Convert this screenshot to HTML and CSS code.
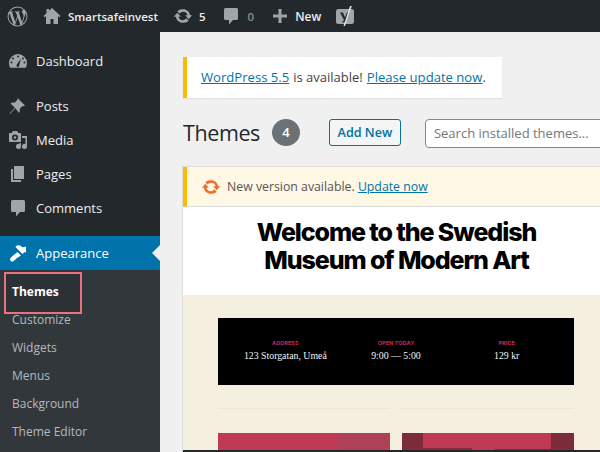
FILE: index.html
```html
<!DOCTYPE html>
<html lang="en">
<head>
<meta charset="utf-8">
<title>Themes</title>
<link rel="stylesheet" href="styles.css">
</head>
<body>
<div class="adminbar">
  <svg class="ab-wp" viewBox="0 0 20 20"><path d="M10 .5a9.5 9.5 0 1 0 0 19 9.5 9.5 0 0 0 0-19zM1.500 10c0-1.200.26-2.400.72-3.450l4.060 11.100A8.500 8.500 0 0 1 1.500 10zm8.500 8.500c-.83 0-1.640-.12-2.400-.35l2.550-7.400 2.610 7.150.06.120a8.500 8.500 0 0 1-2.820.48zm1.170-12.480c.51-.03.97-.08.97-.08.46-.05.4-.73-.05-.7 0 0-1.380.1-2.270.1-.83 0-2.240-.1-2.240-.1-.46-.03-.51.68-.05.7 0 0 .43.050.89.08l1.320 3.620-1.860 5.570-3.090-9.190c.51-.03.97-.08.97-.08.46-.05.4-.73-.05-.7 0 0-1.380.1-2.270.1h-.55A8.500 8.500 0 0 1 15.750 3.720h-.11c-.83 0-1.430.73-1.430 1.510 0 .7.4 1.290.84 2 .33.570.71 1.310.71 2.380 0 .74-.28 1.600-.66 2.790l-.85 2.850zm3.110 11.360 2.600-7.510c.49-1.220.65-2.190.65-3.050 0-.31-.02-.6-.06-.87A8.500 8.500 0 0 1 14.280 17.380z"/></svg>
  <svg class="ab-ico ab-home" viewBox="0 0 20 20"><path d="M18.500 10 10 2 7 4.800V3H4.500v4.200L1.500 10l1.200 1.200L4 10v8h4.500v-5h3v5H16v-8l1.300 1.200z"/></svg>
  <span class="ab-site">Smartsafeinvest</span>
  <svg class="ab-ico ab-upd" viewBox="0 0 20 20"><path d="M10.200 3.280c3.530 0 6.430 2.610 6.920 6h2.080l-3.500 4-3.500-4h2.320a4.439 4.439 0 0 0-4.320-3.440c-1.450 0-2.730.71-3.540 1.790L4.290 5.220a6.955 6.955 0 0 1 5.910-1.940zm-.4 13.440c-3.520 0-6.430-2.610-6.920-6H.8l3.500-4 3.500 4H5.480a4.439 4.439 0 0 0 4.320 3.440c1.450 0 2.730-.71 3.540-1.790l2.370 2.410a6.955 6.955 0 0 1-5.910 1.940z"/></svg>
  <span class="ab-num">5</span>
  <svg class="ab-ico ab-com" viewBox="0 0 20 20"><path d="M4.500 2h11A1.500 1.500 0 0 1 17 3.500v9a1.500 1.500 0 0 1-1.500 1.500H12l-4 4.500V14H4.500A1.500 1.500 0 0 1 3 12.500v-9A1.500 1.500 0 0 1 4.500 2z"/></svg>
  <span class="ab-zero">0</span>
  <svg class="ab-ico ab-plus" viewBox="0 0 20 20"><path d="M17 8.500v3h-5.500V17h-3v-5.500H3v-3h5.500V3h3v5.500z"/></svg>
  <span class="ab-new">New</span>
  <svg class="ab-yoast" viewBox="0 0 18 20"><rect x="0" y="3" width="18" height="15" rx="2.500"/><path class="yo-y" d="M4 6.500h3l2 5 2-5h2.500l-3.500 8c-.5 1.300-1.200 2-2.500 2H6.500v-1.600c.8 0 1.200-.3 1.500-1z"/><path class="yo-s" d="M14 0h1.800L9 20H7.500z"/></svg>
</div>
<div class="layout">
  <nav class="sidebar">
    <a class="mi"><svg viewBox="0 0 20 20"><path fill-rule="evenodd" d="M10 3a9 9 0 0 0-9 9c0 1.800.5 3.400 1.400 4.800h15.200A9 9 0 0 0 19 12a9 9 0 0 0-9-9zM9 5.500a1 1 0 1 1 2 0 1 1 0 0 1-2 0zM5 6.500a1 1 0 1 1 0 2 1 1 0 0 1 0-2zm-1.500 6a1 1 0 1 1 0-2 1 1 0 0 1 0 2zm7.500 3a1.500 1.500 0 0 1-2.500-1.500L13 7.500 11.300 14c.1.600 0 1.100-.3 1.500zm4-9a1 1 0 1 1 0 2 1 1 0 0 1 0-2zm1.500 6a1 1 0 1 1 0-2 1 1 0 0 1 0 2z"/></svg><span>Dashboard</span></a>
    <a class="mi mi-gap"><svg viewBox="0 0 20 20"><path d="M10.440 3.020 17 9.580l-1.400.7-1-.4-2.900 2.900c.4 1.400.2 2.900-.7 4.120L7.400 12.300 2 18l-.4-.4 5.300-5.800-4.400-4.400c1.200-.9 2.700-1.100 4.100-.7l2.900-2.900-.4-1 1.340-.3z"/></svg><span>Posts</span></a>
    <a class="mi"><svg viewBox="0 0 20 20"><path fill-rule="evenodd" d="M13 11V4c0-.55-.45-1-1-1h-1.670L9 1H5L3.670 3H2c-.55 0-1 .45-1 1v7c0 .55.45 1 1 1h10c.55 0 1-.45 1-1zM7 4.500a3 3 0 1 1 0 6 3 3 0 0 1 0-6zM14 6h5v10.500a2.500 2.500 0 1 1-1.500-2.300V8h-3.500zm-1 7v3.500a2.500 2.500 0 1 1-1.500-2.300V13zM7 6.200a1.300 1.300 0 1 0 0 2.600 1.300 1.300 0 0 0 0-2.600z"/></svg><span>Media</span></a>
    <a class="mi"><svg viewBox="0 0 20 20"><path d="M6 15V2h10v13H6zm-1 1h8v2H3V5h2v11z"/></svg><span>Pages</span></a>
    <a class="mi"><svg viewBox="0 0 20 20"><path d="M4.500 2h11A1.500 1.500 0 0 1 17 3.500v9a1.500 1.500 0 0 1-1.500 1.500H12l-4 4.500V14H4.500A1.500 1.500 0 0 1 3 12.500v-9A1.500 1.500 0 0 1 4.500 2z"/></svg><span>Comments</span></a>
    <a class="mi mi-gap mi-cur"><svg viewBox="0 0 20 20"><path d="M14.480 11.060 7.410 3.990l1.500-1.500c.5-.56 2.300-.47 3.590.32 1.290.78 1.770 1.640 2.370 1.520.59-.12 1.730-.6 3.130-.6v5.500c-1.500-.2-2-.2-2.500.83zM13 12.550l-3.500-3.500-4.350 3.350c-.6.600-2.400 2-3 3.400-.4.800.1 1.600.6 2.100s1.400 1 2.100.6c1.400-.6 2.800-2.400 3.400-3z"/></svg><span>Appearance</span></a>
    <div class="sub">
      <a class="si si-active">Themes</a>
      <a class="si">Customize</a>
      <a class="si">Widgets</a>
      <a class="si">Menus</a>
      <a class="si">Background</a>
      <a class="si">Theme Editor</a>
    </div>
  </nav>
  <main class="content">
    <div class="notice"><a>WordPress 5.5</a><span>is available!</span><a>Please update now</a>.</div>
    <div class="head">
      <h1>Themes</h1>
      <span class="count">4</span>
      <a class="addnew">Add New</a>
      <span class="search">Search installed themes...</span>
    </div>
    <section class="card">
      <div class="upd">
        <svg viewBox="0 0 20 20"><path d="M10.200 3.280c3.530 0 6.430 2.610 6.920 6h2.080l-3.500 4-3.500-4h2.320a4.439 4.439 0 0 0-4.320-3.440c-1.450 0-2.730.71-3.540 1.790L4.290 5.220a6.955 6.955 0 0 1 5.910-1.940zm-.4 13.440c-3.520 0-6.430-2.610-6.920-6H.8l3.500-4 3.500 4H5.480a4.439 4.439 0 0 0 4.320 3.440c1.450 0 2.730-.71 3.540-1.790l2.370 2.410a6.955 6.955 0 0 1-5.910 1.940z"/></svg>
        <span>New version available. <a>Update now</a></span>
      </div>
      <div class="welcome">Welcome to the Swedish<br>Museum of Modern Art</div>
      <div class="cream">
        <div class="info">
          <div class="col"><b>ADDRESS</b><span>123 Storgatan, Umeå</span></div>
          <div class="col"><b>OPEN TODAY</b><span>9:00 — 5:00</span></div>
          <div class="col"><b>PRICE</b><span>129 kr</span></div>
        </div>
        <div class="rule"></div>
        <div class="tiles">
          <div class="tile tile-a"></div>
          <div class="tile tile-b"></div>
        </div>
      </div>
      <div class="strip"></div>
    </section>
  </main>
</div>
</body>
</html>
```
FILE: styles.css
```css
* { box-sizing: border-box; }
html, body { margin: 0; padding: 0; }
body { width: 600px; height: 452px; overflow: hidden; background: #f0f0f1; font-family: "Open Sans", "Noto Sans", sans-serif; }
a { display: block; }
.adminbar { height: 32px; background: #23282d; color: #eee; display: flex; align-items: center; font-size: 11.5px; font-weight: 600; }
.adminbar svg { fill: #a0a5aa; flex: none; }
.ab-wp { width: 21px; height: 21px; margin-left: 7px; }
.ab-ico { width: 20px; height: 20px; }
.ab-home { margin-left: 14px; }
.ab-site { margin-left: 6px; }
.ab-upd { margin-left: 15px; }
.ab-num { margin-left: 6px; }
.ab-com { margin-left: 15px; }
.ab-zero { margin-left: 7px; color: #8a8f94; }
.ab-plus { margin-left: 16px; }
.ab-new { margin-left: 5px; font-size: 12px; }
.ab-yoast { width: 18px; height: 20px; margin-left: 15px; }
.yo-y { fill: #23282d; }
.yo-s { fill: #dfe1e2; }
.layout { display: flex; height: 420px; }
.sidebar { width: 160px; flex: none; background: #23282d; padding-top: 12px; }
.mi { height: 34px; display: flex; align-items: center; color: #eee; font-size: 13px; position: relative; }
.mi svg { width: 20px; height: 20px; margin-left: 8px; margin-right: 8px; fill: #a0a5aa; flex: none; }
.mi-gap { margin-top: 11px; }
.mi-cur { background: #0073aa; color: #fff; }
.mi-cur svg { fill: #fff; }
.mi-cur::after { content: ""; position: absolute; right: 0; top: 50%; margin-top: -8px; border: 8px solid transparent; border-right-color: #f0f0f1; border-left-width: 0; }
.sub { background: #32373c; height: 200px; padding-top: 8px; position: relative; isolation: isolate; }
.si { height: 28px; line-height: 28px; padding-left: 12px; color: #b4b9be; font-size: 12px; position: relative; }
.si-active { color: #fff; font-weight: 700; }
.si-active::before { content: ""; position: absolute; z-index: -1; left: 4px; top: -6px; width: 74px; height: 38px; border: 2px solid #e8737f; background: #2c3136; }
.content { flex: 1; min-width: 0; padding: 25px 0 0 23px; overflow: hidden; }
.notice { width: 319px; height: 41px; background: #fff; border-left: 4px solid #ffb900; box-shadow: 0 1px 1px rgba(0,0,0,.06); padding-left: 14px; line-height: 41px; font-size: 13px; color: #444; white-space: nowrap; display: flex; }
.notice span { margin: 0 4px 0 4px; }
.notice a, .upd a { display: inline; color: #0073aa; text-decoration: underline; }
.notice a { font-size: 13.1px; }
.head { display: flex; align-items: flex-start; height: 29px; margin-top: 21px; }
h1 { margin: 0; font-size: 21.5px; letter-spacing: -.4px; font-weight: 400; color: #23282d; line-height: 28px; width: 77px; white-space: nowrap; }
.count { width: 28px; height: 27px; border-radius: 50%; background: #6c7176; color: #fff; font-size: 13px; font-weight: 600; text-align: center; line-height: 27px; margin-left: 12px; flex: none; }
.addnew { margin-left: 29px; width: 72px; height: 27px; border: 1px solid #0071a1; border-radius: 3px; background: #f3f5f6; color: #0071a1; font-size: 12.6px; font-weight: 600; line-height: 25px; text-align: center; flex: none; }
.search { margin-left: 24px; width: 200px; height: 29px; border: 1px solid #7e8993; border-radius: 4px; background: #fff; color: #72777c; font-size: 13px; line-height: 27px; padding-left: 8px; flex: none; white-space: nowrap; }
.card { margin-top: 19px; width: 427px; background: #fff; box-shadow: 0 0 0 1px rgba(0,0,0,.08); }
.upd { height: 40px; background: #fff8e5; border-left: 4px solid #ffb900; border-bottom: 1px solid #ddd; display: flex; align-items: center; font-size: 12.3px; color: #555; padding-left: 14px; }
.upd svg { width: 20px; height: 20px; fill: #f56e28; margin-right: 6px; flex: none; }
.welcome { height: 88px; padding-top: 11px; text-align: center; font-family: Inter, sans-serif; font-weight: 800; font-size: 25px; line-height: 28px; letter-spacing: -1.1px; color: #000; }
.cream { height: 155px; background: #f5efe0; padding: 23px 0 0 35px; }
.info { width: 356px; height: 67px; background: #000; display: grid; grid-template-columns: repeat(3, 1fr); padding: 21px 12px 0; }
.col { display: flex; flex-direction: column; align-items: center; font-family: "Liberation Serif", serif; color: #f4f4f4; font-size: 9.8px; }
.col b { font-family: Inter, sans-serif; font-size: 5.4px; color: #cd2653; font-weight: 700; line-height: 8px; margin-bottom: 3px; letter-spacing: .15px; }
.rule { width: 356px; height: 1px; background: #ebe5d6; margin-top: 23px; position: relative; }
.rule::after { content: ""; position: absolute; left: 172px; top: -1px; width: 10px; height: 3px; background: #f5efe0; }
.tiles { display: flex; gap: 12px; margin-top: 24px; }
.tile { width: 172px; height: 17px; }
.tile-a { background: linear-gradient(90deg, #bf3a55 0 119px, #ae4057 119px); }
.tile-b { background: linear-gradient(#7d2a3c, #7d2a3c) 0 100% / 70px 2px no-repeat, linear-gradient(#7d2a3c, #7d2a3c) 93px 100% / 60px 1px no-repeat, linear-gradient(90deg, #7d2a3c 0 21px, #bf3a55 21px 149px, #7d2a3c 149px); }
.strip { height: 2px; background: #23282d; }
```
